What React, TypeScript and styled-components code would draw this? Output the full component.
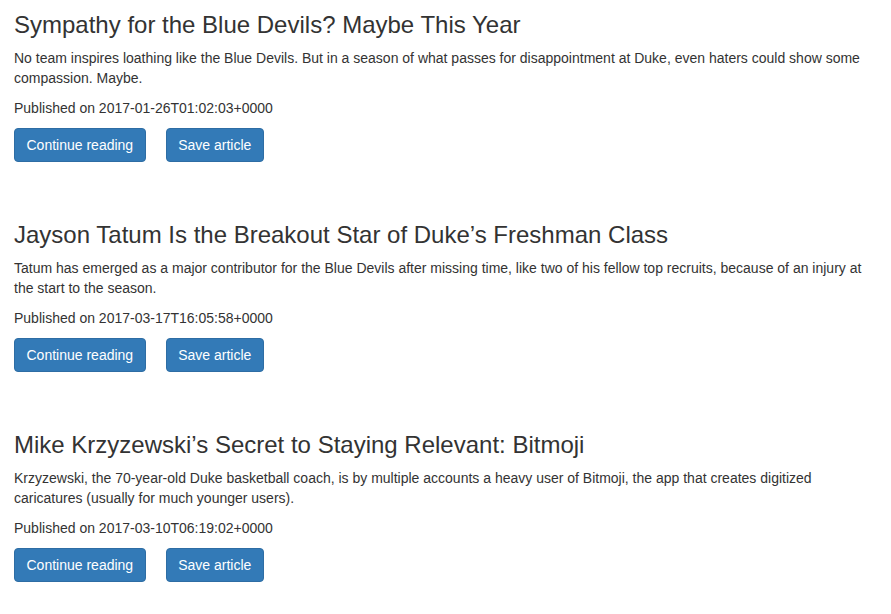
import React from "react";
import styled, { createGlobalStyle } from "styled-components";

const GlobalStyle = createGlobalStyle`
  html, body {
    margin: 0;
    padding: 0;
    background: #ffffff;
  }
  body {
    font-family: "Liberation Sans", Arial, Helvetica, sans-serif;
    font-size: 14px;
    line-height: 1.42857143;
    color: #333333;
  }
`;

const ArticleList = styled.main`
  display: flex;
  flex-direction: column;
  gap: 59px;
  padding: 11px 16px 20px 14px;
`;

const Article = styled.article`
  display: flex;
  flex-direction: column;
`;

const Title = styled.h3`
  margin: 0 0 10px;
  font-size: 24px;
  font-weight: 500;
  line-height: 27px;
  color: #333333;
`;

const Summary = styled.p`
  margin: 0 0 10px;
`;

const Meta = styled.p`
  margin: 0 0 10px;
`;

const Actions = styled.div`
  display: flex;
  gap: 20px;
`;

const Button = styled.button`
  height: 34px;
  padding: 6px 11.5px;
  font-family: inherit;
  font-size: 14px;
  line-height: 1.42857143;
  color: #ffffff;
  background-color: #337ab7;
  border: 1px solid #2e6da4;
  border-radius: 4px;
  cursor: pointer;
  white-space: nowrap;
`;

interface Story {
  title: string;
  summary: string;
  published: string;
}

const stories: Story[] = [
  {
    title: "Sympathy for the Blue Devils? Maybe This Year",
    summary:
      "No team inspires loathing like the Blue Devils. But in a season of what passes for disappointment at Duke, even haters could show some compassion. Maybe.",
    published: "2017-01-26T01:02:03+0000",
  },
  {
    title: "Jayson Tatum Is the Breakout Star of Duke\u2019s Freshman Class",
    summary:
      "Tatum has emerged as a major contributor for the Blue Devils after missing time, like two of his fellow top recruits, because of an injury at the start to the season.",
    published: "2017-03-17T16:05:58+0000",
  },
  {
    title: "Mike Krzyzewski\u2019s Secret to Staying Relevant: Bitmoji",
    summary:
      "Krzyzewski, the 70-year-old Duke basketball coach, is by multiple accounts a heavy user of Bitmoji, the app that creates digitized caricatures (usually for much younger users).",
    published: "2017-03-10T06:19:02+0000",
  },
];

const App: React.FC = () => {
  return (
    <>
      <GlobalStyle />
      <ArticleList>
        {stories.map((story) => (
          <Article key={story.title}>
            <Title>{story.title}</Title>
            <Summary>{story.summary}</Summary>
            <Meta>Published on {story.published}</Meta>
            <Actions>
              <Button>Continue reading</Button>
              <Button>Save article</Button>
            </Actions>
          </Article>
        ))}
      </ArticleList>
    </>
  );
};

export default App;
